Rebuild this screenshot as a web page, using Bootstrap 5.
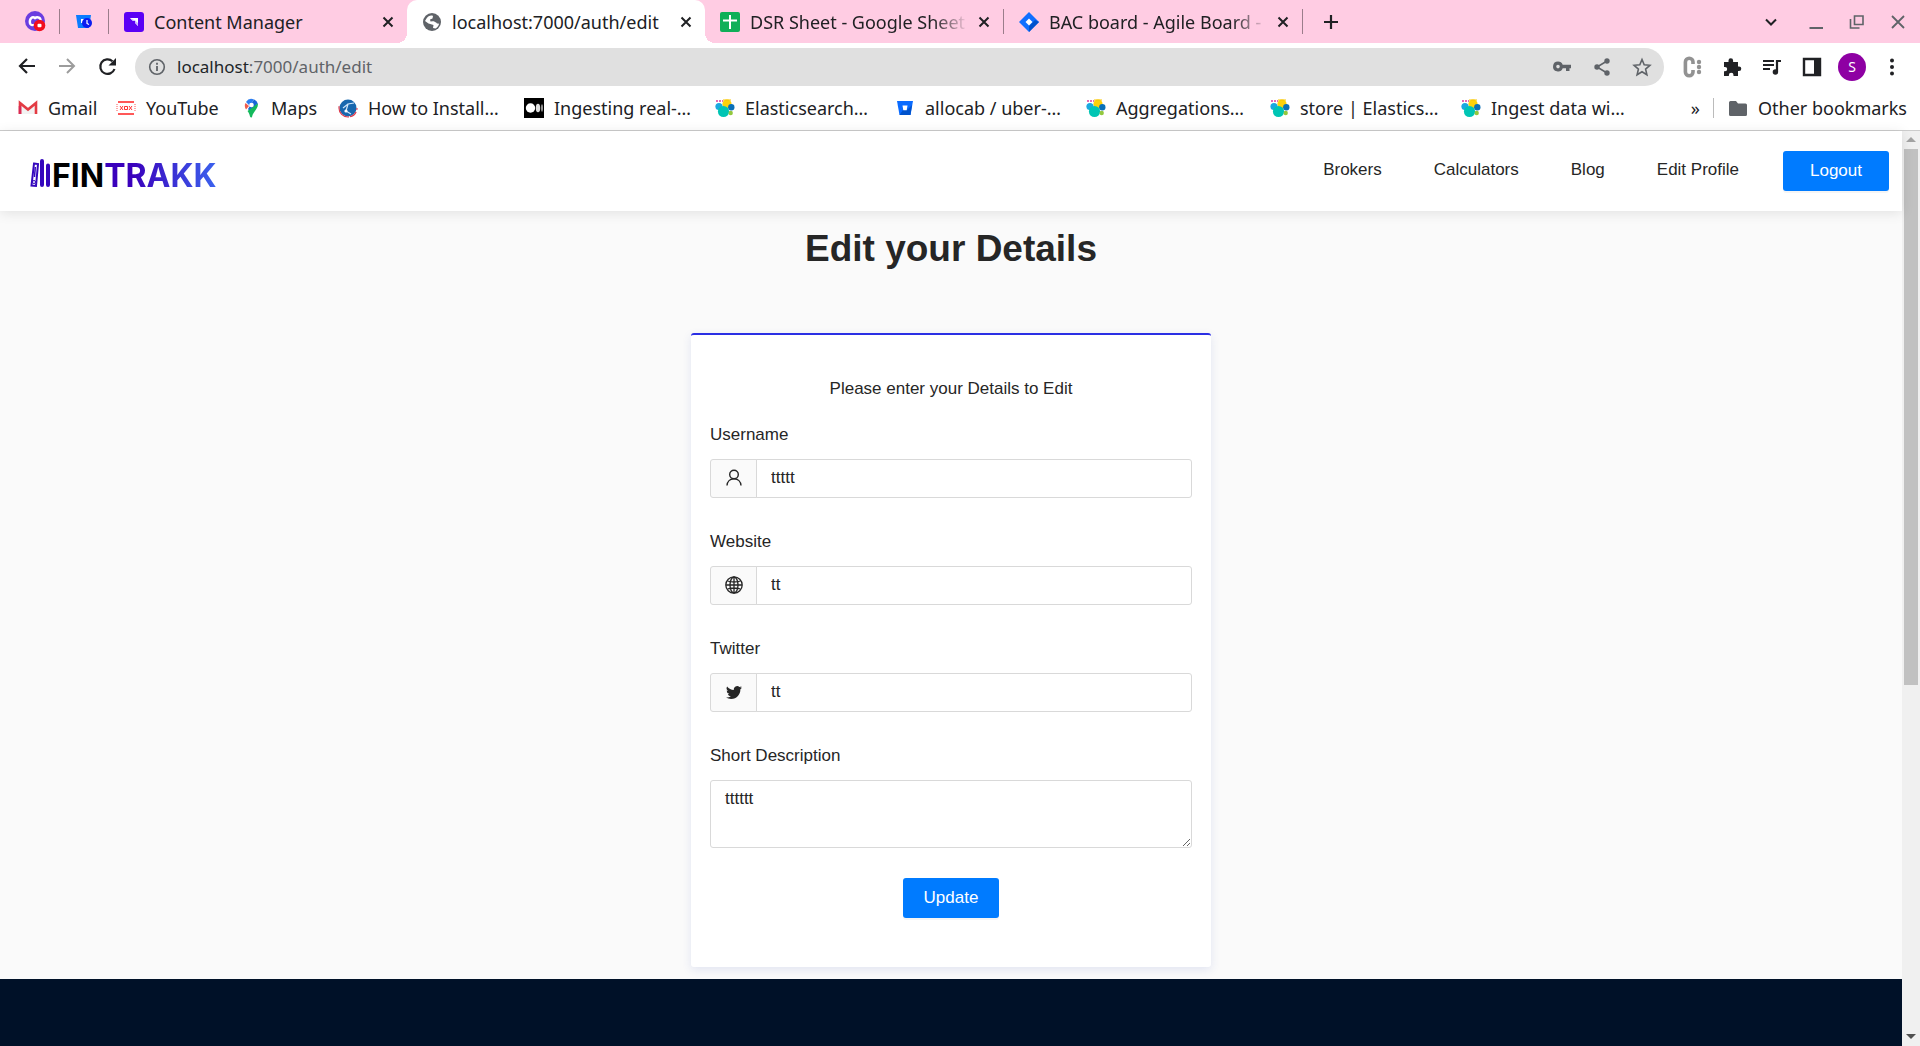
<!DOCTYPE html>
<html lang="en">
<head>
<meta charset="utf-8">
<meta name="viewport" content="width=device-width, initial-scale=1">
<title>Edit your Details</title>
<link href="https://cdn.jsdelivr.net/npm/bootstrap@5.3.0/dist/css/bootstrap.min.css" rel="stylesheet">
<style>
  body { font-family: "Liberation Sans", Arial, sans-serif; font-size: 17px; line-height: 28px; color: #262626; background: #fff; }
  svg { display: block; flex: none; }
  button { padding: 0; border: 0; background: none; color: inherit; }
  .browser { font-family: "Noto Sans", "Open Sans", sans-serif; font-size: 18px; line-height: 24px; color: #202124; }
  .browser a { color: inherit; text-decoration: none; }

  /* tab strip */
  .tabstrip { background: #ffcce3; height: 43px; }
  .pin { width: 49px; height: 25px; border-right: 1px solid #9b7d8b; }
  .pin-first { width: 60px; padding-left: 10px; }
  .tab { width: 298px; height: 43px; padding: 0 13px 0 15px; gap: 10px; position: relative; }
  .tab-text { flex: 1 1 0; overflow: hidden; white-space: nowrap; }
  .tab-fade { -webkit-mask-image: linear-gradient(90deg, #000 84%, transparent 100%); mask-image: linear-gradient(90deg, #000 84%, transparent 100%); }
  .tab-on { background: #fff; border-radius: 10px 10px 0 0; }
  .tab-on::before, .tab-on::after { content: ""; position: absolute; bottom: 0; width: 10px; height: 10px; }
  .tab-on::before { left: -10px; background: radial-gradient(circle at 0 0, transparent 10px, #fff 10px); }
  .tab-on::after { right: -10px; background: radial-gradient(circle at 100% 0, transparent 10px, #fff 10px); }
  .tab-rule { width: 1px; height: 25px; background: #9b7d8b; }
  .tab-end { gap: 21px; padding-right: 12px; color: #5f6368; }

  /* toolbar */
  .toolbar { height: 43px; padding: 5px 18px 0 17px; gap: 20px; }
  .omnibox { height: 38px; border-radius: 19px; background: #e0e0e0; padding: 0 4px 0 12px; color: #5f6368; gap: 10px; margin: 0 -2px; }
  .url { font-size: 17px; }
  .tool-set { gap: 20px; padding-right: 8px; }
  .avatar { width: 28px; height: 28px; border-radius: 50%; background: #8e00a3; color: #fff; font-size: 14px; margin: 0 -4px; }

  /* bookmarks */
  .bookmarks { height: 45px; border-bottom: 1px solid #ccc; padding: 0 13px 1px 18px; }
  .bm-list { display: grid; grid-template-columns: 98px 125px 97px 186px 191px 180px 191px 184px 191px 170px; }
  .bm { display: flex; align-items: center; gap: 10px; white-space: nowrap; }
  .bm-rule { width: 1px; height: 20px; background: #bbb; margin: 0 14px 0 13px; }

  /* site */
  .site-nav { height: 80px; background: #fff; box-shadow: 0 2px 12px rgba(0,0,0,.1); padding: 0 13px 0 30px; position: relative; }
  .site-nav a { color: #262626; text-decoration: none; }
  .brand { font-family: Inter, sans-serif; font-weight: 700; font-size: 32px; line-height: 32px; gap: 2px; padding-top: 10px; }
  .brand svg { margin-bottom: 6px; }
  .brand-dark { color: #000; }
  .brand-blue { background: linear-gradient(90deg, #3a00bc 25%, #3b62ee); -webkit-background-clip: text; background-clip: text; color: transparent; }
  .links { gap: 52px; padding: 0 44px 3px 0; }
  .btn-site { background: #007bff; color: #fff; border: 0; border-radius: 3px; font-size: 17px; line-height: 28px; height: 40px; padding: 6px 21px; box-shadow: 0 2px 0 rgba(0,0,0,.04); }
  .btn-site:hover { background: #006be0; color: #fff; }
  .btn-nav { min-width: 106px; }
  .pane { background: #fafafa; }
  h1 { font-size: 37px; line-height: 46px; font-weight: 700; margin: 0 0 61px; }
  .edit-area { padding: 15px 16px 12px; }
  .edit-card { max-width: 520px; background: #fff; border-top: 2px solid #2b2fe4; border-radius: 3px; padding: 40px 19px 49px; box-shadow: 0 3px 10px rgba(50,70,180,.12); }
  .intro { margin-bottom: 18px; }
  .field { margin-bottom: 30px; }
  .field label { display: block; margin-bottom: 10px; }
  .field .form-control { font-size: 17px; line-height: 27px; color: #262626; border-color: #d9d9d9; border-radius: 3px; padding: 4px 14px 6px; height: 39px; }
  .field textarea.form-control { height: 68px; }
  .field .input-group-text { width: 47px; padding: 0 0 2px; justify-content: center; background: #fafafa; border-color: #d9d9d9; border-radius: 3px; color: #262626; }
  .foot { background: #001128; min-height: 60px; }

  /* scrollbar */
  .rail { width: 18px; background: #f0f0f0; padding: 0 2px; }
  .rail-end { height: 18px; }
  .thumb { height: 61%; background: #c1c1c1; }
</style>
<script src="https://cdn.jsdelivr.net/npm/bootstrap@5.3.0/dist/js/bootstrap.bundle.min.js"></script>
</head>
<body class="d-flex flex-column min-vh-100">

<svg width="0" height="0" class="position-absolute" aria-hidden="true">
  <symbol id="x" viewBox="0 0 12 12"><path d="M1.5 1.5l9 9M10.500 1.500l-9 9" stroke="currentColor" stroke-width="2" fill="none"/></symbol>
  <symbol id="elastic" viewBox="0 0 20 20">
    <path d="M1 3h7" stroke="#e0389c" stroke-width="1.300" stroke-dasharray="2 1"/>
    <circle cx="12" cy="6" r="4.600" fill="#fed10a"/><path d="M8 2h8" stroke="#f6c400" stroke-width="1"/>
    <circle cx="4" cy="8.500" r="3.600" fill="#1ba9e0"/><circle cx="16.300" cy="9.300" r="3.200" fill="#0a70b8"/>
    <circle cx="8.500" cy="13.500" r="5.600" fill="#00c5b4"/><circle cx="15.700" cy="15" r="2.200" fill="#93c83e"/>
  </symbol>
</svg>

<header class="browser">
  <div class="tabstrip d-flex align-items-center">
    <div class="pin pin-first d-flex align-items-center justify-content-center">
      <svg width="22" height="22" viewBox="0 0 22 22"><circle cx="11" cy="10" r="10" fill="#6a3de0"/><path d="M6 12.500C5 7.500 8.500 5 11 7.200 13.500 5 17 7 16.500 10M6 12.500c1 2 3 2 4 1" stroke="#fff" stroke-width="2.400" fill="none"/><circle cx="15.500" cy="14.500" r="5.800" fill="#f20d1e"/><rect x="13.500" y="12.800" width="4" height="3.500" rx="1" fill="#fff"/></svg>
    </div>
    <div class="pin d-flex align-items-center justify-content-center">
      <svg width="18" height="16" viewBox="0 0 18 16"><path d="M1 1h15l-2 13H3z" fill="#0a7cff"/><path d="M6 5h5v4H6z" fill="#fff"/><circle cx="12" cy="9" r="5" fill="#0b1cf0"/><path d="M12 6v3.500l2 1" stroke="#fff" stroke-width="1.200" fill="none"/></svg>
    </div>
    <div class="tab d-flex align-items-center">
      <svg width="20" height="20" viewBox="0 0 20 20"><rect width="20" height="20" rx="3" fill="#5b00f5"/><path d="M6 6h8v8l-2.700-2.700V8.700H8.700z" fill="#fff"/><path d="M6 6l2.700 2.700h2.600v2.600L14 14v-3l-3-2.600z" fill="#cfb5ff"/></svg>
      <span class="tab-text">Content Manager</span>
      <button aria-label="Close tab"><svg width="12" height="12"><use href="#x"/></svg></button>
    </div>
    <div class="tab tab-on d-flex align-items-center">
      <svg width="20" height="20" viewBox="0 0 20 20"><circle cx="10" cy="10" r="9" fill="#5f6368"/><path d="M4.500 6.500C6 4 9 3 11 4l-.5 2.500L8 7.500l.5 2 4.500-.5 2 2.500c1 0 2-.5 2 .5-.5 2-2 3.500-3.500 4.500L11 16l.5-3-5-1.500L3 9z" fill="#fff"/><path d="M9.500 8l4-3 3 3.500-2.500 2z" fill="#5f6368"/></svg>
      <span class="tab-text">localhost:7000/auth/edit</span>
      <button aria-label="Close tab"><svg width="12" height="12"><use href="#x"/></svg></button>
    </div>
    <div class="tab d-flex align-items-center">
      <svg width="20" height="20" viewBox="0 0 20 20"><rect width="20" height="20" rx="2" fill="#0faf58"/><path d="M10 3v14M3 8.500h14" stroke="#fff" stroke-width="2"/></svg>
      <span class="tab-text tab-fade">DSR Sheet - Google Sheet</span>
      <button aria-label="Close tab"><svg width="12" height="12"><use href="#x"/></svg></button>
    </div>
    <span class="tab-rule"></span>
    <div class="tab d-flex align-items-center">
      <svg width="20" height="20" viewBox="0 0 20 20"><path d="M10 0l10 10-10 10L0 10z" fill="#0f6fff"/><path d="M10 14l6-6 4 2-10 10z" fill="#0052cc"/><path d="M10 6.500l3.500 3.500-3.500 3.500L6.500 10z" fill="#fff"/></svg>
      <span class="tab-text tab-fade">BAC board - Agile Board -</span>
      <button aria-label="Close tab"><svg width="12" height="12"><use href="#x"/></svg></button>
    </div>
    <span class="tab-rule"></span>
    <button class="ms-3 ps-1" aria-label="New tab"><svg width="16" height="16" viewBox="0 0 16 16"><path d="M8 1v14M1 8h14" stroke="currentColor" stroke-width="2.200"/></svg></button>
    <div class="tab-end d-flex align-items-center ms-auto">
      <button class="me-2" aria-label="Search tabs"><svg width="12" height="12" viewBox="0 0 12 12"><path d="M1 3.500l5 5 5-5" stroke="#202124" stroke-width="2" fill="none"/></svg></button>
      <button aria-label="Minimize"><svg width="20" height="20" viewBox="0 0 20 20"><path d="M3.500 16h13.500" stroke="currentColor" stroke-width="2"/></svg></button>
      <button aria-label="Restore"><svg width="20" height="20" viewBox="0 0 20 20"><path d="M7.500 4h8.500v8.500H7.500zM3.500 7v9h9" stroke="currentColor" stroke-width="1.600" fill="none"/></svg></button>
      <button aria-label="Close window"><svg width="20" height="20" viewBox="0 0 20 20"><path d="M4 4l12 12M16 4L4 16" stroke="currentColor" stroke-width="1.800"/></svg></button>
    </div>
  </div>

  <div class="toolbar d-flex align-items-center">
    <button aria-label="Back"><svg width="20" height="20" viewBox="0 0 20 20"><path d="M18 9H4M10 2L3 9l7 7" stroke="currentColor" stroke-width="2.200" fill="none"/></svg></button>
    <button aria-label="Forward"><svg width="20" height="20" viewBox="0 0 20 20"><path d="M2 9h14M10 2l7 7-7 7" stroke="#9c9c9c" stroke-width="2" fill="none"/></svg></button>
    <button aria-label="Reload"><svg width="20" height="20" viewBox="0 0 20 20"><path d="M17.500 12A7.300 7.300 0 1 1 15.500 4.200" stroke="currentColor" stroke-width="2.200" fill="none"/><path d="M19 1v7.500h-7.500z" fill="currentColor"/></svg></button>
    <div class="omnibox d-flex align-items-center flex-fill">
      <svg width="20" height="20" viewBox="0 0 20 20"><circle cx="10" cy="10" r="7.300" stroke="currentColor" stroke-width="1.600" fill="none"/><path d="M10 9v5M10 5.800v1.900" stroke="currentColor" stroke-width="1.800"/></svg>
      <div class="url flex-fill" role="textbox" aria-label="Address" contenteditable="true" spellcheck="false"><span class="text-dark">localhost</span>:7000/auth/edit</div>
      <div class="tool-set d-flex align-items-center">
        <svg width="20" height="20" viewBox="0 0 20 20"><path d="M6 4.500a5 5 0 1 0 4.700 6.800H14V14h3.500v-2.700H19V7.700h-8.300A5 5 0 0 0 6 4.500zm0 3.300a1.800 1.800 0 1 1 0 3.600 1.800 1.800 0 0 1 0-3.600z" fill="currentColor"/></svg>
        <svg width="20" height="20" viewBox="0 0 20 20"><path d="M15 4L5 10l10 6" stroke="currentColor" stroke-width="1.600" fill="none"/><circle cx="15" cy="4" r="2.700" fill="currentColor"/><circle cx="5" cy="10" r="2.700" fill="currentColor"/><circle cx="15" cy="16" r="2.700" fill="currentColor"/></svg>
        <svg width="20" height="20" viewBox="0 0 20 20"><path d="M10 2.500l2.200 5.300 5.700.5-4.300 3.800 1.300 5.600-4.900-3-4.900 3 1.300-5.600-4.300-3.800 5.700-.5z" stroke="currentColor" stroke-width="1.600" fill="none"/></svg>
      </div>
    </div>
    <div class="tool-set d-flex align-items-center pe-0">
      <svg width="20" height="22" viewBox="0 0 20 22"><path d="M11 8V6a3.800 3.800 0 0 0-7.600 0v10a3.800 3.800 0 0 0 7.600 0v-2" stroke="#929292" stroke-width="3.600" fill="none"/><circle cx="17" cy="6" r="2.200" fill="#929292"/><circle cx="17" cy="11" r="2.200" fill="#929292"/><circle cx="17" cy="16" r="2.200" fill="#929292"/></svg>
      <svg width="20" height="20" viewBox="0 0 20 20"><path d="M2 5h4.500V3.500a2.300 2.300 0 0 1 4.600 0V5H16v4.500h1a2.300 2.300 0 0 1 0 4.600h-1V19h-4.500v-1a2.300 2.300 0 0 0-4.600 0v1H2v-4.700h1a2.200 2.200 0 0 0 0-4.400H2z" fill="#202124"/></svg>
      <svg width="20" height="20" viewBox="0 0 20 20"><path d="M1 4h11M1 8h11M1 12h7" stroke="#202124" stroke-width="2"/><path d="M15 15V4h4" stroke="#202124" stroke-width="2.200" fill="none"/><circle cx="13.400" cy="15" r="2.700" fill="#202124"/></svg>
      <svg width="20" height="20" viewBox="0 0 20 20"><path d="M2 2h16v16H2z" stroke="#202124" stroke-width="2.400" fill="none"/><path d="M12 2h6v16h-6z" fill="#202124"/></svg>
      <button class="avatar d-flex align-items-center justify-content-center">S</button>
      <svg width="20" height="20" viewBox="0 0 20 20"><circle cx="10" cy="3.500" r="2" fill="#202124"/><circle cx="10" cy="10" r="2" fill="#202124"/><circle cx="10" cy="16.500" r="2" fill="#202124"/></svg>
    </div>
  </div>

  <nav class="bookmarks d-flex align-items-center" aria-label="Bookmarks">
    <div class="bm-list flex-fill">
      <a class="bm" href="#"><svg width="20" height="20" viewBox="0 0 20 20"><path d="M2 16V5l8 6.500L18 5v11" fill="#f2f2f2" stroke="#e33b43" stroke-width="2.600"/><path d="M2 16V8" stroke="#d92a55" stroke-width="2.600"/></svg>Gmail</a>
      <a class="bm" href="#"><svg width="20" height="20" viewBox="0 0 20 20"><path d="M2 4h16M2 16h16" stroke="#f22" stroke-width="1.400"/><path d="M1 6v8M19 6v8" stroke="#f55" stroke-width="1" stroke-dasharray="1 1"/><path d="M4 8l3 4M7 8l-3 4M13 8l3 4M16 8l-3 4M8.500 8.500h3v3h-3z" stroke="#f33" stroke-width="1" fill="none"/></svg>YouTube</a>
      <a class="bm" href="#"><svg width="20" height="20" viewBox="0 0 20 20"><path d="M5 4a6.500 6.500 0 0 1 8-2.500L9 8z" fill="#2b7df0"/><path d="M13 1.500a6 6 0 0 1 3.800 4L9 14l-2-3z" fill="#1a66d6"/><path d="M16.800 5.500c1 5-4.800 7.500-5.800 13.500-.8 1-1.500.5-2-.5C8.500 16 7.500 14 6.500 13z" fill="#14b95c"/><path d="M4.500 5L8 8l-3 3.500C3.500 9 3.500 7 4.500 5z" fill="#ef5b4c"/><circle cx="10.500" cy="7" r="2.300" fill="#fff"/></svg>Maps</a>
      <a class="bm" href="#"><svg width="20" height="20" viewBox="0 0 20 20"><circle cx="10" cy="10" r="8.500" fill="#1767ae"/><circle cx="10" cy="10" r="9" fill="none" stroke="#dd3c4e" stroke-width="1.200" stroke-dasharray="2 2 8 1 17 26.500"/><path d="M5 10l5-4 6-1M10 6l-2 7 5 3" stroke="#cfe6fa" stroke-width="1.200" fill="none"/><circle cx="8" cy="13" r="1.600" fill="#fff"/></svg>How to Install…</a>
      <a class="bm" href="#"><svg width="20" height="20" viewBox="0 0 20 20"><rect width="20" height="20" fill="#000"/><circle cx="6.500" cy="10" r="4.700" fill="#fff"/><ellipse cx="14" cy="10" rx="2.200" ry="4.300" fill="#ddd"/><ellipse cx="18" cy="10" rx=".8" ry="3.700" fill="#bbb"/></svg>Ingesting real-…</a>
      <a class="bm" href="#"><svg width="20" height="20"><use href="#elastic"/></svg>Elasticsearch…</a>
      <a class="bm" href="#"><svg width="20" height="20" viewBox="0 0 20 20"><path d="M2 3h16l-2.500 14h-11z" fill="#0a6bff"/><path d="M12 12l5-5-1.500 10h-11L8 12z" fill="#0052cc"/><path d="M7.500 7.500h5l-.8 4.700H8.300z" fill="#fff"/></svg>allocab / uber-…</a>
      <a class="bm" href="#"><svg width="20" height="20"><use href="#elastic"/></svg>Aggregations…</a>
      <a class="bm" href="#"><svg width="20" height="20"><use href="#elastic"/></svg>store | Elastics…</a>
      <a class="bm" href="#"><svg width="20" height="20"><use href="#elastic"/></svg>Ingest data wi…</a>
    </div>
    <button aria-label="More bookmarks">»</button>
    <span class="bm-rule"></span>
    <a class="bm" href="#"><svg width="20" height="20" viewBox="0 0 20 20"><path d="M1 4.500A1.500 1.500 0 0 1 2.500 3H8l2 2.500h7.500A1.500 1.500 0 0 1 19 7v9.500a1.500 1.500 0 0 1-1.500 1.500h-15A1.500 1.500 0 0 1 1 16.500z" fill="#5f6368"/></svg>Other bookmarks</a>
  </nav>
</header>

<div class="d-flex flex-fill">
  <div class="pane d-flex flex-column flex-fill">
    <nav class="site-nav d-flex align-items-center justify-content-between">
      <a class="brand d-flex align-items-center" href="#">
        <svg width="20" height="30" viewBox="0 0 20 30"><path d="M4 5.500l4 .5-2 22-4.500-.5z" stroke="#3407bd" stroke-width="2" fill="#fff"/><path d="M5.300 9l-.8 10" stroke="#3407bd" stroke-width="1.500"/><circle cx="4" cy="24" r="1.500" fill="none" stroke="#3407bd"/><path d="M12 3v24M18 7.500V27" stroke="#3407bd" stroke-width="4" stroke-linecap="round"/></svg>
        <span><span class="brand-dark">FIN</span><span class="brand-blue">TRAKK</span></span>
      </a>
      <div class="d-flex align-items-center">
        <div class="links d-flex">
          <a href="#">Brokers</a><a href="#">Calculators</a><a href="#">Blog</a><a href="#">Edit Profile</a>
        </div>
        <button class="btn btn-site btn-nav">Logout</button>
      </div>
    </nav>
    <main class="edit-area">
      <h1 class="text-center">Edit your Details</h1>
      <form class="edit-card mx-auto">
        <p class="intro text-center">Please enter your Details to Edit</p>
        <div class="field">
          <label for="username">Username</label>
          <div class="input-group">
            <span class="input-group-text"><svg width="18" height="18" viewBox="0 0 18 18"><circle cx="9" cy="5.500" r="4.300" stroke="currentColor" stroke-width="1.400" fill="none"/><path d="M2 16.500c.2-4 3-6.700 7-6.700s6.800 2.700 7 6.700" stroke="currentColor" stroke-width="1.400" fill="none"/></svg></span>
            <input id="username" type="text" class="form-control" value="ttttt">
          </div>
        </div>
        <div class="field">
          <label for="website">Website</label>
          <div class="input-group">
            <span class="input-group-text"><svg width="18" height="18" viewBox="0 0 18 18"><g stroke="currentColor" stroke-width="1.300" fill="none"><circle cx="9" cy="9" r="8.200"/><ellipse cx="9" cy="9" rx="4" ry="8"/><path d="M9 1v16M1 9h16M2.500 5c4 1.200 9 1.200 13 0M2.500 13c4-1.200 9-1.200 13 0"/></g></svg></span>
            <input id="website" type="text" class="form-control" value="tt">
          </div>
        </div>
        <div class="field">
          <label for="twitter">Twitter</label>
          <div class="input-group">
            <span class="input-group-text"><svg width="16" height="16" viewBox="0 0 16 16"><path d="M5.026 15c6.038 0 9.341-5.003 9.341-9.334 0-.14 0-.282-.006-.422A6.685 6.685 0 0 0 16 3.542a6.658 6.658 0 0 1-1.889.518 3.301 3.301 0 0 0 1.447-1.817 6.533 6.533 0 0 1-2.087.793A3.286 3.286 0 0 0 7.875 6.030a9.325 9.325 0 0 1-6.767-3.429 3.289 3.289 0 0 0 1.018 4.382A3.323 3.323 0 0 1 .64 6.575v.045a3.288 3.288 0 0 0 2.632 3.218 3.203 3.203 0 0 1-.865.115 3.230 3.230 0 0 1-.614-.057 3.283 3.283 0 0 0 3.067 2.277A6.588 6.588 0 0 1 .78 13.580a6.320 6.320 0 0 1-.78-.045A9.344 9.344 0 0 0 5.026 15z" fill="currentColor"/></svg></span>
            <input id="twitter" type="text" class="form-control" value="tt">
          </div>
        </div>
        <div class="field">
          <label for="about">Short Description</label>
          <textarea id="about" class="form-control">tttttt</textarea>
        </div>
        <div class="text-center"><button type="button" class="btn btn-site">Update</button></div>
      </form>
    </main>
    <footer class="foot flex-fill"></footer>
  </div>
  <div class="rail d-flex flex-column" aria-hidden="true">
    <div class="rail-end d-flex align-items-center justify-content-center"><svg width="10" height="6" viewBox="0 0 10 6"><path d="M0 5l5-5 5 5z" fill="#a3a3a3"/></svg></div>
    <div class="flex-fill"><div class="thumb"></div></div>
    <div class="rail-end d-flex align-items-center justify-content-center"><svg width="10" height="6" viewBox="0 0 10 6"><path d="M0 0l5 5 5-5z" fill="#505050"/></svg></div>
  </div>
</div>
</body>
</html>
